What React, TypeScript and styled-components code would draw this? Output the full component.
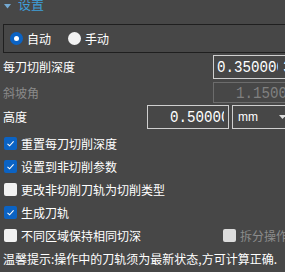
import React from 'react';
import styled, { createGlobalStyle } from 'styled-components';

const GlobalStyle = createGlobalStyle`
  html, body {
    margin: 0;
    padding: 0;
    background: #474747;
    overflow: hidden;
  }
`;

const Page = styled.div`
  width: 296px;
  padding-left: 3px;
  box-sizing: border-box;

  display: flex;
  flex-direction: column;

  font-family: 'Noto Sans CJK SC', 'Noto Sans', sans-serif;
  font-size: 12px;
  color: #ffffff;
`;

const Header = styled.div`
  height: 27px;
  margin-top: -3px;

  display: flex;
  align-items: flex-start;
  gap: 7px;
`;

const HeaderTitle = styled.span`
  font-size: 13px;
  line-height: 14px;
  color: #3f9fd8;
`;

const Caret = styled.svg`
  margin: 7px 0 0 1px;
`;

const RadioBox = styled.div`
  height: 29px;
  box-sizing: border-box;
  padding-left: 6px;

  display: flex;
  align-items: center;
  gap: 17px;

  border: 1px solid #1f1f1f;
  border-right: none;
`;

const RadioItem = styled.label`
  display: flex;
  align-items: center;
  gap: 4px;
  line-height: 14px;
`;

const RadioDot = styled.span<{ $checked?: boolean }>`
  width: 13px;
  height: 13px;
  box-sizing: border-box;
  border-radius: 50%;
  background: ${(p) => (p.$checked ? '#0b63c4' : '#f2f2f2')};

  display: flex;
  align-items: center;
  justify-content: center;

  &::after {
    content: '';
    width: 5px;
    height: 5px;
    border-radius: 50%;
    background: #ffffff;
    display: ${(p) => (p.$checked ? 'block' : 'none')};
  }
`;

const FieldRow = styled.div<{ $height: number; $top: number }>`
  height: ${(p) => p.$height}px;
  margin-top: ${(p) => p.$top}px;

  display: flex;
  align-items: center;
`;

const FieldLabel = styled.span<{ $disabled?: boolean }>`
  flex: 1;
  line-height: 14px;
  color: ${(p) => (p.$disabled ? '#8a8a8a' : '#ffffff')};
`;

const ValueBox = styled.div<{ $width: number; $disabled?: boolean; $pad: number }>`
  width: ${(p) => p.$width}px;
  height: 100%;
  box-sizing: border-box;
  padding-left: ${(p) => p.$pad}px;

  display: flex;
  align-items: center;
  overflow: hidden;

  border: 1px solid ${(p) => (p.$disabled ? '#6c6c6c' : '#cfcfcf')};
  color: ${(p) => (p.$disabled ? '#808080' : '#ffffff')};
`;

const ValueText = styled.span<{ $clip?: number }>`
  ${(p) => (p.$clip ? `width: ${p.$clip}px;` : '')}
  flex-shrink: 0;
  overflow: hidden;
  white-space: nowrap;

  font-family: 'Liberation Mono', 'DejaVu Sans Mono', monospace;
  font-size: 14.2px;
  line-height: 16px;
  transform: scaleY(1.15);
  transform-origin: center;
`;

const Tail = styled.span`
  margin-left: 5px;
  flex-shrink: 0;
  font-family: 'Liberation Mono', 'DejaVu Sans Mono', monospace;
  font-size: 14.2px;
  line-height: 16px;
  transform: scaleY(1.15);
`;

const UnitSelect = styled.div`
  width: 64px;
  height: 100%;
  margin-left: 3px;
  box-sizing: border-box;
  padding: 0 9px 0 5px;

  display: flex;
  align-items: center;
  justify-content: space-between;

  border: 1px solid #cfcfcf;
  font-family: 'Liberation Sans', 'Noto Sans', sans-serif;
  font-size: 12px;
`;

const CheckList = styled.div`
  margin-top: 3px;
  display: flex;
  flex-direction: column;
`;

const CheckRow = styled.div`
  height: 23px;
  display: flex;
  align-items: center;
`;

const CheckItem = styled.label<{ $disabled?: boolean; $offset?: number }>`
  margin-left: ${(p) => p.$offset ?? 1}px;
  display: flex;
  align-items: center;
  gap: 4px;
  line-height: 14px;
  color: ${(p) => (p.$disabled ? '#8c8c8c' : '#ffffff')};
`;

const Box = styled.span<{ $checked?: boolean; $disabled?: boolean }>`
  width: 13px;
  height: 13px;
  border-radius: 2px;
  background: ${(p) => (p.$checked ? '#0b63c4' : p.$disabled ? '#dcdcdc' : '#f2f2f2')};

  display: flex;
  align-items: center;
  justify-content: center;
`;

const Tip = styled.div`
  height: 23px;
  display: flex;
  align-items: center;
  line-height: 14px;
  white-space: nowrap;
`;

const Check = ({ checked, disabled, label, offset }: { checked?: boolean; disabled?: boolean; label: string; offset?: number }) => (
  <CheckItem $disabled={disabled} $offset={offset}>
    <Box $checked={checked} $disabled={disabled}>
      {checked && (
        <svg width="9" height="9" viewBox="0 0 9 9">
          <polyline points="1.5,4.8 3.6,6.8 7.6,2.4" fill="none" stroke="#ffffff" strokeWidth="1.1" />
        </svg>
      )}
    </Box>
    {label}
  </CheckItem>
);

const App = () => {
  return (
    <>
      <GlobalStyle />
      <Page>
        <Header>
          <Caret width="7" height="5" viewBox="0 0 7 5">
            <polygon points="0,0 7,0 3.5,4.5" fill="#74a9d2" />
          </Caret>
          <HeaderTitle>设置</HeaderTitle>
        </Header>

        <RadioBox>
          <RadioItem>
            <RadioDot $checked />
            自动
          </RadioItem>
          <RadioItem>
            <RadioDot />
            手动
          </RadioItem>
        </RadioBox>

        <FieldRow $height={24} $top={2}>
          <FieldLabel>每刀切削深度</FieldLabel>
          <ValueBox $width={83} $pad={3}>
            <ValueText $clip={61}>0.350000</ValueText>
            <Tail>3</Tail>
          </ValueBox>
        </FieldRow>

        <FieldRow $height={21} $top={3}>
          <FieldLabel $disabled>斜坡角</FieldLabel>
          <ValueBox $width={83} $pad={22} $disabled>
            <ValueText>1.150000</ValueText>
          </ValueBox>
        </FieldRow>

        <FieldRow $height={24} $top={2}>
          <FieldLabel>高度</FieldLabel>
          <ValueBox $width={82} $pad={22}>
            <ValueText $clip={54}>0.500000</ValueText>
          </ValueBox>
          <UnitSelect>
            mm
            <svg width="7" height="4" viewBox="0 0 7 4">
              <polygon points="0,0 7,0 3.5,4" fill="#dddddd" />
            </svg>
          </UnitSelect>
        </FieldRow>

        <CheckList>
          <CheckRow>
            <Check checked label="重置每刀切削深度" />
          </CheckRow>
          <CheckRow>
            <Check checked label="设置到非切削参数" />
          </CheckRow>
          <CheckRow>
            <Check label="更改非切削刀轨为切削类型" />
          </CheckRow>
          <CheckRow>
            <Check checked label="生成刀轨" />
          </CheckRow>
          <CheckRow>
            <Check label="不同区域保持相同切深" />
            <Check disabled label="拆分操作" offset={82} />
          </CheckRow>
        </CheckList>

        <Tip>温馨提示:操作中的刀轨须为最新状态,方可计算正确.</Tip>
      </Page>
    </>
  );
};

export default App;
